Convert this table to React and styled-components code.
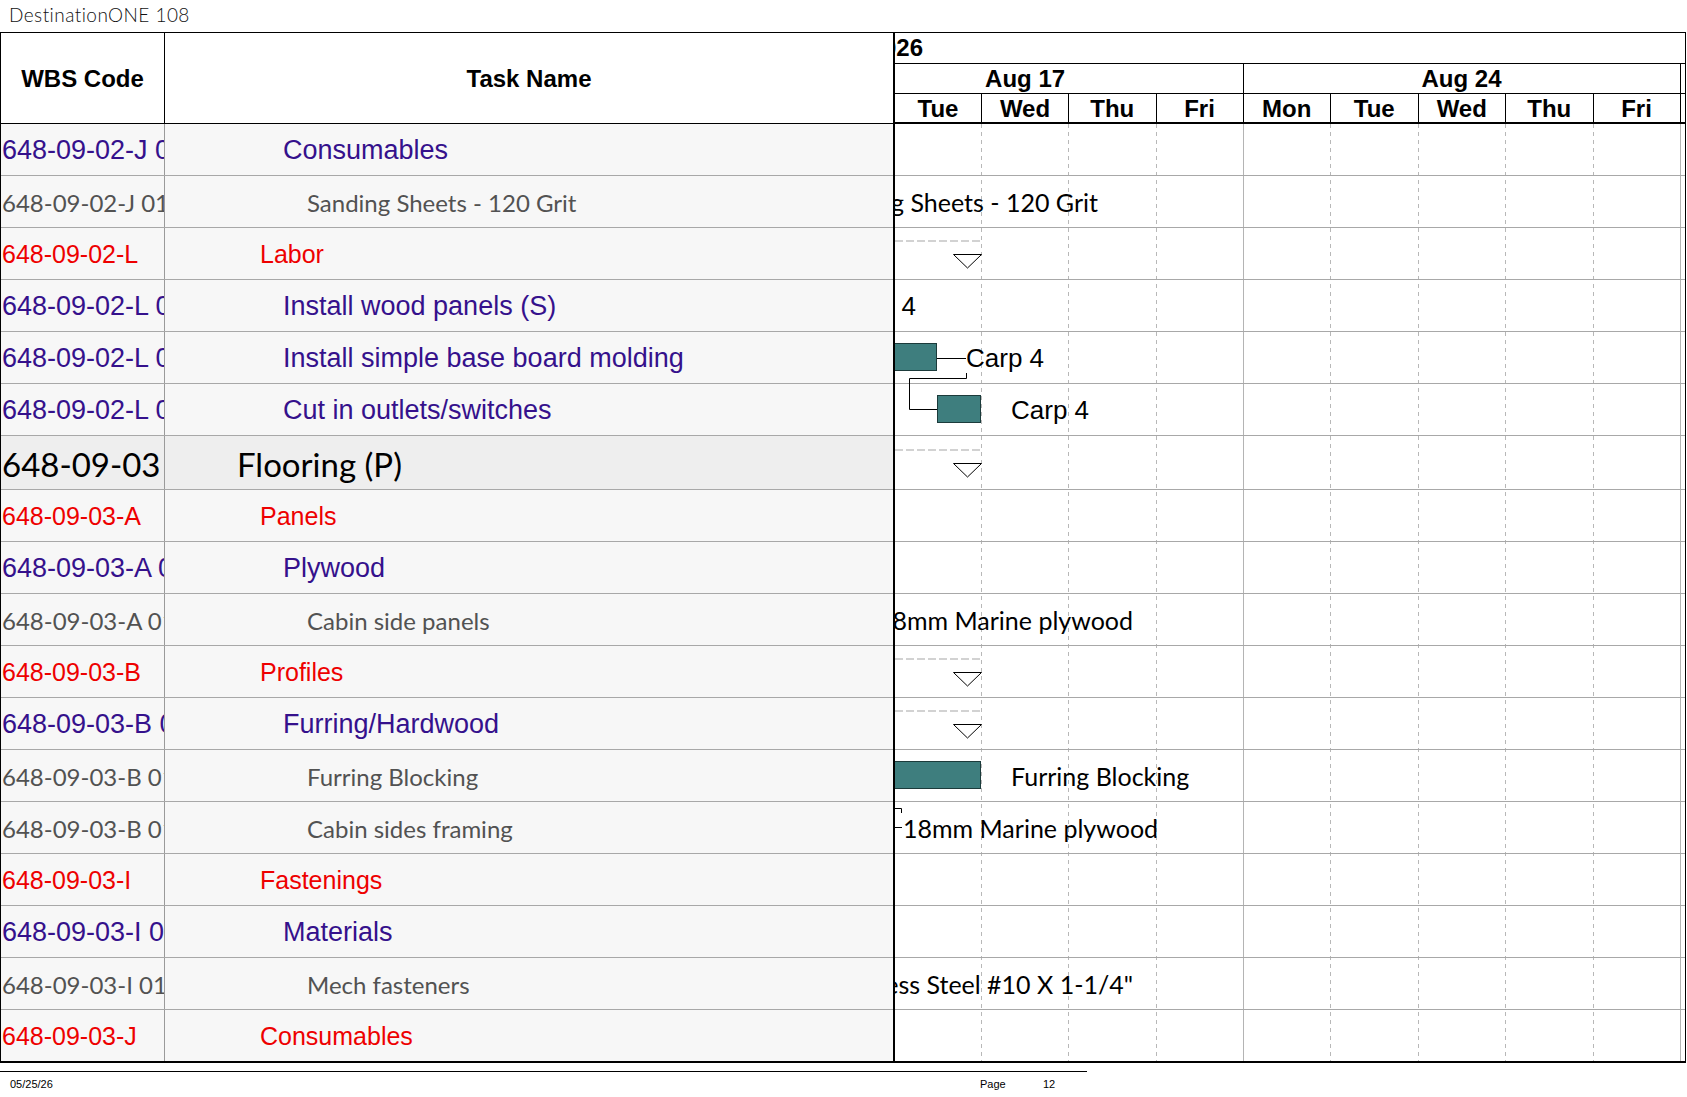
import React from "react";
import styled, { createGlobalStyle } from "styled-components";

const ARIAL = `"Liberation Sans", Arial, sans-serif`;
const CALIBRI = `Lato, "Open Sans", sans-serif`;

// x of each day boundary, in page pixels
const EDGES = [895, 982, 1069, 1156.5, 1243.5, 1331, 1418.5, 1506, 1593.5, 1680.5];
const DAY = 87.3;
const DAYS = ["Tue", "Wed", "Thu", "Fri", "Mon", "Tue", "Wed", "Thu", "Fri"];
// the first week starts on a Monday that is scrolled out of view
const WEEKS = [
  { label: "Aug 17", from: 0, to: 4, hidden: DAY },
  { label: "Aug 24", from: 4, to: 9, hidden: 0 },
];
const widthOf = (a, b) => EDGES[b] - EDGES[a];

const KINDS = {
  group: { color: "#ee0000", font: ARIAL, size: 25, indent: 95 },
  task: { color: "#35118c", font: ARIAL, size: 27, indent: 118 },
  item: { color: "#525252", font: CALIBRI, size: 24, indent: 142 },
  phase: { color: "#000", font: CALIBRI, size: 33, indent: 72 },
};

const ROWS = [
  { wbs: "648-09-02-J 01", name: "Consumables", kind: "task" },
  {
    wbs: "648-09-02-J 01.01",
    name: "Sanding Sheets - 120 Grit",
    kind: "item",
    labels: [{ text: "Sanding Sheets - 120 Grit", end: 203, calibri: true }],
  },
  { wbs: "648-09-02-L", name: "Labor", kind: "group", summary: true },
  {
    wbs: "648-09-02-L 01",
    name: "Install wood panels (S)",
    kind: "task",
    labels: [{ text: "Carp 4", end: 21 }],
  },
  {
    wbs: "648-09-02-L 02",
    name: "Install simple base board molding",
    kind: "task",
    bar: [-20, 42],
    labels: [{ text: "Carp 4", start: 71 }],
    link: true,
  },
  {
    wbs: "648-09-02-L 03",
    name: "Cut in outlets/switches",
    kind: "task",
    bar: [42, 86],
    labels: [{ text: "Carp 4", start: 116 }],
  },
  { wbs: "648-09-03", name: "Flooring (P)", kind: "phase", summary: true, height: 54 },
  { wbs: "648-09-03-A", name: "Panels", kind: "group" },
  { wbs: "648-09-03-A 01", name: "Plywood", kind: "task" },
  {
    wbs: "648-09-03-A 01.01",
    name: "Cabin side panels",
    kind: "item",
    labels: [{ text: "18mm Marine plywood", end: 238, calibri: true }],
  },
  { wbs: "648-09-03-B", name: "Profiles", kind: "group", summary: true },
  { wbs: "648-09-03-B 01", name: "Furring/Hardwood", kind: "task", summary: true },
  {
    wbs: "648-09-03-B 01.01",
    name: "Furring Blocking",
    kind: "item",
    bar: [-20, 86],
    labels: [{ text: "Furring Blocking", start: 116, calibri: true }],
  },
  {
    wbs: "648-09-03-B 01.02",
    name: "Cabin sides framing",
    kind: "item",
    stub: true,
    labels: [{ text: "18mm Marine plywood", start: 8, calibri: true }],
  },
  { wbs: "648-09-03-I", name: "Fastenings", kind: "group" },
  { wbs: "648-09-03-I 01", name: "Materials", kind: "task" },
  {
    wbs: "648-09-03-I 01.01",
    name: "Mech fasteners",
    kind: "item",
    labels: [{ text: 'Stainless Steel #10 X 1-1/4"', end: 238, calibri: true }],
  },
  { wbs: "648-09-03-J", name: "Consumables", kind: "group", height: 51 },
];

const GlobalStyle = createGlobalStyle`
  html, body {
    margin: 0;
    padding: 0;
    background: #fff;
  }
  body {
    font-family: ${ARIAL};
  }
`;

const Page = styled.div`
  width: 1687px;
  height: 1097px;
  overflow: hidden;
`;

const Title = styled.div`
  height: 32px;
  padding-left: 9px;
  font-family: ${CALIBRI};
  font-weight: 300;
  font-size: 19px;
  letter-spacing: 0.45px;
  line-height: 30px;
  color: #111;
`;

const Table = styled.div`
  display: flex;
  width: 1686px;
  box-sizing: border-box;
  border-top: 1px solid #000;
  border-left: 1px solid #000;
  border-right: 1px solid #000;
  border-bottom: 2px solid #000;
`;

const LeftPane = styled.div`
  width: 892px;
  display: flex;
  flex-direction: column;
`;

const HeadRow = styled.div`
  display: flex;
  height: 91px;
  box-sizing: border-box;
  border-bottom: 1px solid #000;
  background: #fff;
`;

const HeadCell = styled.div`
  display: flex;
  align-items: center;
  justify-content: center;
  box-sizing: border-box;
  padding-top: 2px;
  font-family: ${ARIAL};
  font-weight: bold;
  font-size: 24px;
  color: #000;
  ${(p) => (p.$wbs ? "width: 164px; border-right: 1px solid #000;" : "flex: 1;")}
`;

const Row = styled.div`
  display: flex;
  height: ${(p) => p.$h}px;
  box-sizing: border-box;
  background: ${(p) => (p.$phase ? "#eeeeee" : "#f7f7f7")};
  border-bottom: 1px solid #a8a8a8;
  &:last-child {
    border-bottom: none;
  }
`;

const Cell = styled.div`
  display: flex;
  align-items: center;
  box-sizing: border-box;
  padding-top: 2px;
  overflow: hidden;
  white-space: nowrap;
  color: ${(p) => KINDS[p.$kind].color};
  font-family: ${(p) => KINDS[p.$kind].font};
  font-size: ${(p) => KINDS[p.$kind].size}px;
`;

const WbsCell = styled(Cell)`
  width: 164px;
  padding-left: 1px;
  border-right: 1px solid #9a9a9a;
`;

const TaskCell = styled(Cell)`
  flex: 1;
  padding-left: ${(p) => KINDS[p.$kind].indent}px;
`;

const ChartPane = styled.div`
  flex: 1;
  display: flex;
  flex-direction: column;
  border-left: 2px solid #000;
  overflow: hidden;
`;

const ScaleRow = styled.div`
  display: flex;
  position: relative;
  overflow: hidden;
  height: ${(p) => p.$h}px;
  box-sizing: border-box;
  border-bottom: ${(p) => p.$line}px solid #000;
  font-family: ${ARIAL};
  font-weight: bold;
  font-size: 24px;
  color: #000;
`;

const YearLabel = styled.div`
  position: absolute;
  right: calc(100% - 28px);
  top: 0;
  bottom: 0;
  display: flex;
  align-items: center;
  white-space: nowrap;
`;

const ScaleCell = styled.div`
  width: ${(p) => p.$w + (p.$hidden || 0)}px;
  margin-left: ${(p) => -(p.$hidden || 0)}px;
  flex: none;
  display: flex;
  align-items: center;
  justify-content: center;
  padding-top: 1px;
  box-sizing: border-box;
  border-right: 1px solid #000;
`;

const ChartBody = styled.div`
  position: relative;
  display: flex;
  flex-direction: column;
  background: #fff;
`;

const Grid = styled.div`
  position: absolute;
  inset: 0;
  display: flex;
  z-index: 0;
`;

const GridCol = styled.div`
  width: ${(p) => p.$w}px;
  flex: none;
  box-sizing: border-box;
  ${(p) =>
    p.$solid
      ? "border-right: 1px solid #b4b4b4;"
      : `background-image: linear-gradient(to bottom, #b8b8b8 50%, transparent 50%);
         background-size: 1px 8px;
         background-repeat: repeat-y;
         background-position: right top;`}
`;

const ChartRow = styled.div`
  position: relative;
  z-index: 1;
  height: ${(p) => p.$h}px;
  box-sizing: border-box;
  border-bottom: 1px solid #a8a8a8;
  &:last-child {
    border-bottom: none;
  }
`;

const SummaryLine = styled.div`
  position: absolute;
  left: 0;
  width: 87px;
  top: ${(p) => p.$top}px;
  height: 2px;
  background-image: linear-gradient(to right, #d2d2d2 8px, transparent 8px);
  background-size: 11px 2px;
`;

const Marker = styled.svg`
  position: absolute;
  left: 58px;
  top: ${(p) => p.$top}px;
  overflow: visible;
`;

const Bar = styled.div`
  position: absolute;
  top: 11px;
  height: 28px;
  box-sizing: border-box;
  background: #3e7e7e;
  border: 1px solid #1c3b3b;
`;

const Label = styled.div`
  position: absolute;
  top: 1px;
  bottom: 0;
  display: flex;
  align-items: center;
  white-space: nowrap;
  color: #000;
  font-family: ${(p) => (p.$calibri ? CALIBRI : ARIAL)};
  font-size: ${(p) => (p.$calibri ? 25 : 26)}px;
  ${(p) => (p.$start != null ? `left: ${p.$start}px;` : `right: calc(100% - ${p.$end}px);`)}
`;

const Links = styled.svg`
  position: absolute;
  left: 0;
  top: 0;
  overflow: visible;
  pointer-events: none;
`;

const Footer = styled.div`
  margin-top: 8px;
  width: 1087px;
  border-top: 1px solid #000;
  display: grid;
  grid-template-columns: 970px 63px auto;
  padding: 6px 0 0 10px;
  box-sizing: border-box;
  font-family: ${ARIAL};
  font-size: 11px;
  color: #000;
`;

const rowHeight = (r) => r.height || 52;

function ChartItems({ row }) {
  const phase = row.kind === "phase";
  return (
    <>
      {row.summary && (
        <>
          <SummaryLine $top={phase ? 13 : 12} />
          <Marker $top={phase ? 27 : 26} width="29" height="15" viewBox="0 0 29 15">
            <polygon points="0.5,0.5 28.5,0.5 14.5,14" fill="#fff" stroke="#000" strokeWidth="1" />
          </Marker>
        </>
      )}
      {row.bar && <Bar style={{ left: row.bar[0], width: row.bar[1] - row.bar[0] }} />}
      {row.link && (
        <Links width="80" height="80">
          <path d="M42 26.5 H71" stroke="#000" strokeWidth="1" fill="none" />
          <path d="M71.5 41 V46.5 H14.5 V77.5 H42" stroke="#000" strokeWidth="1" fill="none" />
        </Links>
      )}
      {row.stub && (
        <Links width="10" height="30">
          <path d="M0 6.5 H6.5 V11" stroke="#000" strokeWidth="1" fill="none" />
          <path d="M0 25.5 H7" stroke="#000" strokeWidth="1" fill="none" />
        </Links>
      )}
      {(row.labels || []).map((l, i) => (
        <Label key={i} $start={l.start} $end={l.end} $calibri={l.calibri}>
          {l.text}
        </Label>
      ))}
    </>
  );
}

export default function App() {
  return (
    <Page>
      <GlobalStyle />
      <Title>DestinationONE 108</Title>
      <Table>
        <LeftPane>
          <HeadRow>
            <HeadCell $wbs>WBS Code</HeadCell>
            <HeadCell>Task Name</HeadCell>
          </HeadRow>
          {ROWS.map((r, i) => (
            <Row key={i} $h={rowHeight(r)} $phase={r.kind === "phase"}>
              <WbsCell $kind={r.kind}>{r.wbs}</WbsCell>
              <TaskCell $kind={r.kind}>{r.name}</TaskCell>
            </Row>
          ))}
        </LeftPane>
        <ChartPane>
          <ScaleRow $h={31} $line={1}>
            <YearLabel>2026</YearLabel>
          </ScaleRow>
          <ScaleRow $h={30} $line={1}>
            {WEEKS.map((w) => (
              <ScaleCell key={w.label} $w={widthOf(w.from, w.to)} $hidden={w.hidden}>
                {w.label}
              </ScaleCell>
            ))}
          </ScaleRow>
          <ScaleRow $h={30} $line={2}>
            {DAYS.map((d, i) => (
              <ScaleCell key={i} $w={widthOf(i, i + 1)}>
                {d}
              </ScaleCell>
            ))}
          </ScaleRow>
          <ChartBody>
            <Grid>
              {DAYS.map((d, i) => (
                <GridCol key={i} $w={widthOf(i, i + 1)} $solid={i === 3 || i === 8} />
              ))}
            </Grid>
            {ROWS.map((r, i) => (
              <ChartRow key={i} $h={rowHeight(r)}>
                <ChartItems row={r} />
              </ChartRow>
            ))}
          </ChartBody>
        </ChartPane>
      </Table>
      <Footer>
        <span>05/25/26</span>
        <span>Page</span>
        <span>12</span>
      </Footer>
    </Page>
  );
}
